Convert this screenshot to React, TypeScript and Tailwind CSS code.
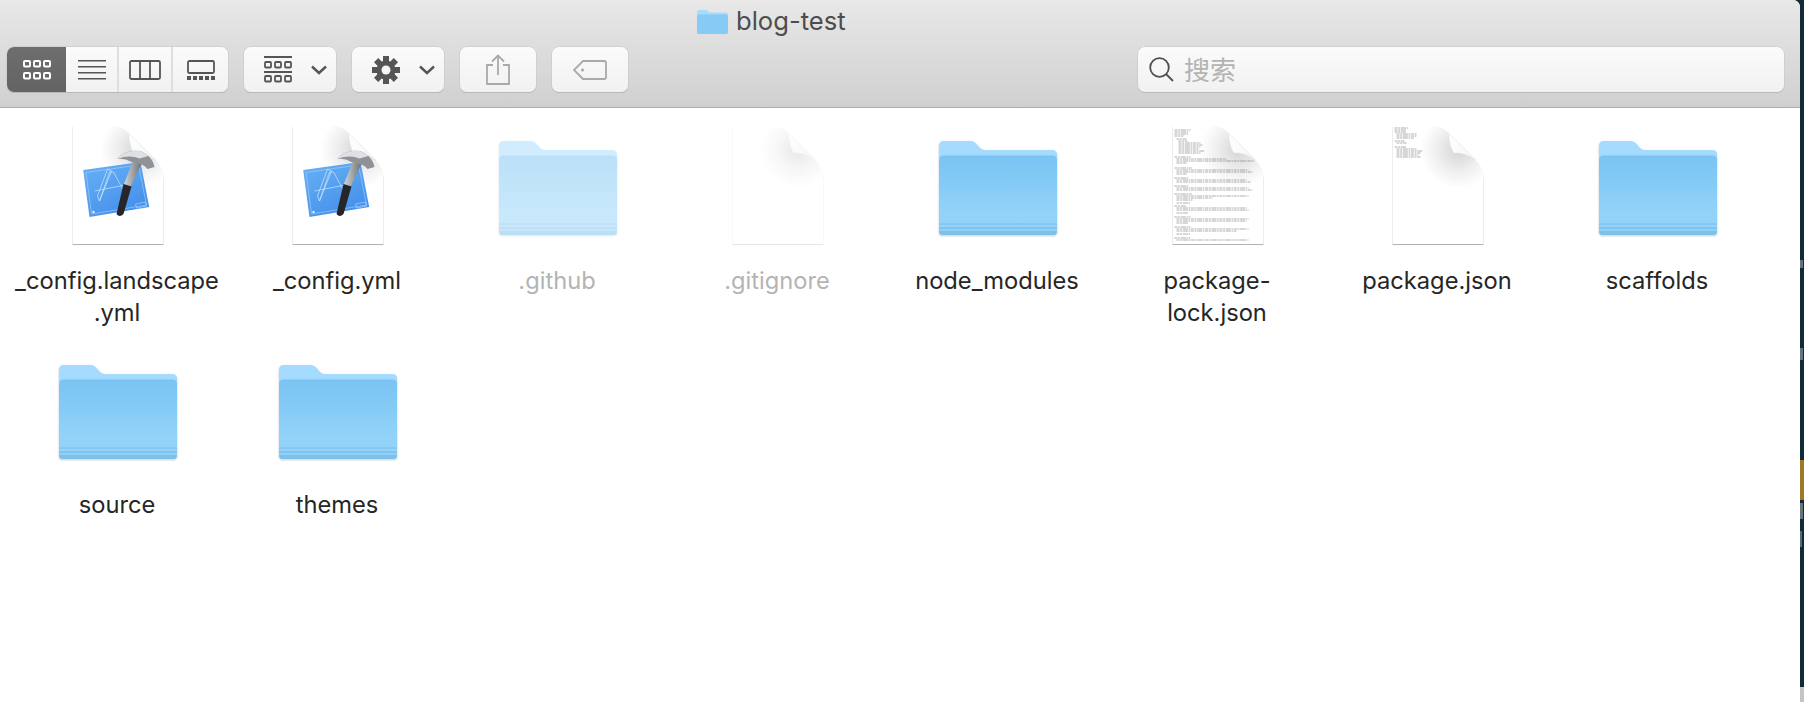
import React from "react";

const font = { fontFamily: "Inter, 'Noto Sans CJK SC', sans-serif" };

function FolderGlyph({ faded = false }: { faded?: boolean }) {
  const id = faded ? "f" : "n";
  return (
    <svg width="120" height="96" viewBox="-1 -1 120 96" className={`mt-[4px] drop-shadow-[0_1px_1px_rgba(60,90,110,0.3)] ${faded ? "opacity-50" : ""}`}>
      <defs>
        <linearGradient id={`front-${id}`} x1="0" y1="0" x2="0" y2="1">
          <stop offset="0" stopColor="#79c3f3" />
          <stop offset="0.75" stopColor="#93d3f9" />
          <stop offset="1" stopColor="#8fd0f7" />
        </linearGradient>
        <linearGradient id={`back-${id}`} x1="0" y1="0" x2="0" y2="1">
          <stop offset="0" stopColor="#a5dbfe" />
          <stop offset="1" stopColor="#9ad5fb" />
        </linearGradient>
      </defs>
      <path d="M0 90 V5 Q0 0 5 0 H32 Q35 0 37 2.5 L41 7 Q43 9 46 9 H113 Q118 9 118 14 V90 Q118 94 114 94 H4 Q0 94 0 90 Z" fill={`url(#back-${id})`} />
      <path d="M0 90 V19 Q0 14.5 5 14.5 H113 Q118 14.5 118 19 V90 Q118 94 114 94 H4 Q0 94 0 90 Z" fill={`url(#front-${id})`} />
      <path d="M0 82 H118 V84 H0 Z" fill="#84c8f3" />
      <path d="M0 84 H118 V86 H0 Z" fill="#97d3f8" />
      <path d="M0 86 H118 V88 H0 Z" fill="#7fc3ef" />
      <path d="M0 88 H118 V90 H0 Z" fill="#92d0f6" />
      <path d="M0 90 H118 Q118 94 114 94 H4 Q0 94 0 90 Z" fill="#7dc0ec" />
    </svg>
  );
}

const body = "M0 0 H40 Q50 0 56 7 L83 34 Q91 42 91 52 V118 H0 Z";

function DocBase({ id, children, over, pale = false }: { id: string; children?: React.ReactNode; over?: React.ReactNode; pale?: boolean }) {
  return (
    <svg width="96" height="124" viewBox="-2.5 -2 96 124">
      <defs>
        <radialGradient id={`shade-${id}`} gradientUnits="userSpaceOnUse" cx="66" cy="24" r="38">
          <stop offset="0" stopColor={pale ? "#e8e8e8" : "#d4d4d4"} />
          <stop offset="0.55" stopColor={pale ? "#f7f7f7" : "#eeeeee"} />
          <stop offset="1" stopColor="#ffffff" />
        </radialGradient>
        <linearGradient id={`fold-${id}`} x1="0" y1="0" x2="1" y2="1">
          <stop offset="0" stopColor="#ffffff" />
          <stop offset="1" stopColor="#f6f6f6" />
        </linearGradient>
      </defs>
      <path d={body} fill="#000" opacity={pale ? 0.1 : 0.3} transform="translate(0 1)" />
      <path d={body} fill={`url(#shade-${id})`} />
      {children}
      <path d="M56 7 L83 34 Q72 26 61 27 Q57 20 56 7 Z" fill={`url(#fold-${id})`} stroke={pale ? "#f0f0f0" : "#dedede"} strokeWidth="0.4" />
      {over}
    </svg>
  );
}

function XcodeDoc({ id }: { id: string }) {
  return (
    <DocBase
      id={id}
      over={
        <>
          <defs>
            <linearGradient id={`bp-${id}`} x1="0" y1="0" x2="0.6" y2="1">
              <stop offset="0" stopColor="#68b2f6" />
              <stop offset="1" stopColor="#4590ea" />
            </linearGradient>
            <linearGradient id={`steel-${id}`} x1="0" y1="0" x2="1" y2="0">
              <stop offset="0" stopColor="#d4d6d9" />
              <stop offset="1" stopColor="#6f7276" />
            </linearGradient>
          </defs>
          <path d="M10.7 44 L68 36 L76.7 81 L17 91 Z" fill={`url(#bp-${id})`} />
          <path d="M13.5 46.5 L66 39 L74 79 L19 88 Z" fill="none" stroke="#a8d0fa" strokeWidth="0.6" />
          <path d="M27 75 L37 46 L41 46 L55 72 M22 65 L58 58" fill="none" stroke="#bcdcfc" strokeWidth="0.8" />
          <path d="M27 75 L25 70 L35 43 L39 45 Z" fill="none" stroke="#d4e8fd" strokeWidth="0.7" />
          <path d="M63 78 L73 76 L74 80 L64 82 Z" fill="none" stroke="#bcdcfc" strokeWidth="0.6" />
          <circle cx="21" cy="86" r="1.2" fill="#e4f0fe" />
          <path d="M60 36 L69 38 L58 61 L51 59 Z" fill={`url(#steel-${id})`} />
          <path d="M51 58 L59 60.5 L51 88 Q47 92 44 88 Z" fill="#26262a" />
          <path d="M45 33 Q50 26 60 25 Q70 24 76 30 Q81 35 82 41 L75 43 Q71 38 65 37.5 L59 36 Q52 32 45 33 Z" fill="#8f9296" />
          <path d="M45 33 Q50 26 60 25 Q70 24 76 30 L67 32.5 Q57 28.5 45 33 Z" fill="#dfe0e3" />
        </>
      }
    />
  );
}

const lockLines: [number, number, number][] = [
  [2, 4, 16],[2, 6, 14],[2, 8, 14],[2, 10, 9],[4, 13, 10],[6, 15, 9],[6, 17, 22],[6, 19, 24],[6, 21, 22],[6, 23, 20],[6, 25, 26],[6, 27, 22],
  [2, 31, 16],[4, 33, 50],[4, 35, 78],[4, 37, 10],[2, 42, 18],[4, 44, 72],[4, 46, 76],[4, 48, 10],[2, 52, 14],[4, 54, 70],[4, 56, 74],[2, 60, 14],[4, 62, 72],[4, 64, 76],
  [2, 68, 18],[4, 70, 72],[4, 72, 36],[4, 74, 16],[4, 77, 14],[2, 80, 12],[4, 82, 70],[4, 84, 72],[4, 87, 12],[2, 91, 16],[4, 93, 72],[4, 95, 70],[4, 97, 12],[2, 101, 16],[4, 103, 72],[4, 105, 60],[4, 108, 14],[2, 112, 16],[4, 114, 72],
];
const pkgLines: [number, number, number][] = [
  [2, 2, 14],[2, 4, 12],[2, 6, 12],[4, 8, 20],[4, 10, 20],[4, 12, 18],[2, 15, 10],[4, 17, 10],[2, 21, 12],[4, 23, 20],[4, 25, 26],[4, 27, 24],[4, 29, 22],[4, 31, 24],
];

function TextDoc({ id, lines }: { id: string; lines: [number, number, number][] }) {
  return (
    <DocBase id={id}>
      {lines.map(([x, y, w], i) => (
        <line key={i} x1={x} x2={x + w} y1={y} y2={y} stroke="#666" strokeOpacity="0.75" strokeWidth="0.7" strokeDasharray="3 0.7 2 0.7 5 0.7 1.5 0.7" />
      ))}
    </DocBase>
  );
}

function Cell({ label, icon, muted = false }: { label: React.ReactNode; icon: React.ReactNode; muted?: boolean }) {
  return (
    <div className="flex flex-col items-center pt-[16px]">
      <div className="h-[124px] w-full pl-[2px] flex items-center justify-center">{icon}</div>
      <div className={`mt-[17px] w-[216px] text-center text-[23.7px] leading-[32px] ${muted ? "text-[#b4b4b4]" : "text-[#262626]"}`}>{label}</div>
    </div>
  );
}

function Btn({ className = "", children }: { className?: string; children: React.ReactNode }) {
  return (
    <div className={`h-[45px] flex items-center rounded-[7px] bg-gradient-to-b from-[#fbfbfb] to-[#f1f1f1] shadow-[0_0_0_0.5px_#c4c4c4,0_1px_0_#acacac] ${className}`}>
      {children}
    </div>
  );
}

const Chevron = () => (
  <svg width="16" height="10" viewBox="0 0 16 10" fill="none" stroke="#555" strokeWidth="2.4">
    <path d="M1 1.5 L8 8 L15 1.5" />
  </svg>
);

const SmallGrid = ({ c }: { c: string }) => (
  <svg width="28" height="20" viewBox="0 0 28 20" fill="none" stroke={c} strokeWidth="2">
    {[1, 11, 21].map((x) => [1, 13].map((y) => <rect key={`${x}-${y}`} x={x} y={y} width="6" height="5.5" rx="1" />))}
  </svg>
);

export default function App() {
  return (
    <div style={font} className="flex h-[702px] w-[1804px] overflow-hidden bg-[#0f2b36]">
      <div className="w-[1800px] flex flex-col bg-white rounded-tr-[7px] overflow-hidden">
        <div className="h-[108px] shrink-0 border-b border-[#adadad] bg-gradient-to-b from-[#e8e8e8] to-[#d0d0d0]">
          <div className="h-[47px] flex items-start pl-[697px]">
            <div className="flex items-center gap-[8px] mt-[7px]">
              <svg width="31" height="24" viewBox="0 0 31 24" className="mt-[1px]">
                <path d="M0 22 V2 Q0 0 2 0 H9 Q10.5 0 11 1 L12 2.5 H29 Q31 2.5 31 4.5 V22 Q31 24 29 24 H2 Q0 24 0 22 Z" fill="#a5dbfe" />
                <path d="M0 22 V6 Q0 4.5 2 4.5 H29 Q31 4.5 31 6 V22 Q31 24 29 24 H2 Q0 24 0 22 Z" fill="#86cbf6" />
              </svg>
              <span className="text-[25.6px] leading-[28px] text-[#4d4d4d]">blog-test</span>
            </div>
          </div>
          <div className="flex items-center pl-[7px] pr-[16px]">
            <Btn className="w-[221px] overflow-hidden">
              <div className="w-[59px] h-full flex items-center justify-center bg-gradient-to-b from-[#6e6e6e] to-[#636363]"><SmallGrid c="#ffffff" /></div>
              <div className="w-[53px] h-full flex items-center justify-center border-r-2 border-[#dedede]">
                <svg width="28" height="20" viewBox="0 0 28 20" fill="#555">
                  <rect y="0" width="28" height="1.5" /><rect y="6" width="28" height="1.5" /><rect y="12" width="28" height="1.5" /><rect y="18" width="28" height="1.5" />
                </svg>
              </div>
              <div className="w-[54px] h-full flex items-center justify-center border-r-2 border-[#dedede]">
                <svg width="32" height="20" viewBox="0 0 32 20" fill="none" stroke="#555" strokeWidth="1.8">
                  <rect x="1" y="1" width="30" height="18" rx="1.5" /><path d="M11 1 V19 M21 1 V19" />
                </svg>
              </div>
              <div className="flex-1 h-full flex items-center justify-center">
                <svg width="28" height="20" viewBox="0 0 28 20" fill="#555">
                  <rect x="1" y="1" width="26" height="12" rx="1.5" fill="none" stroke="#555" strokeWidth="1.8" />
                  {[0, 6, 12, 18, 24].map((x) => <rect key={x} x={x} y="16" width="4" height="4" />)}
                </svg>
              </div>
            </Btn>
            <Btn className="w-[92px] ml-[16px] pl-[20px] gap-[19px]">
              <svg width="28" height="27" viewBox="0 0 28 27" fill="none" stroke="#555" strokeWidth="1.8">
                <path d="M0 1 H28 M0 16 H28" />
                <rect x="1" y="6" width="6" height="5.5" rx="1" /><rect x="11" y="6" width="6" height="5.5" rx="1" /><rect x="21" y="6" width="6" height="5.5" rx="1" />
                <rect x="1" y="20" width="6" height="5.5" rx="1" /><rect x="11" y="20" width="6" height="5.5" rx="1" /><rect x="21" y="20" width="6" height="5.5" rx="1" />
              </svg>
              <Chevron />
            </Btn>
            <Btn className="w-[92px] ml-[16px] pl-[20px] gap-[19px]">
              <svg width="28" height="28" viewBox="0 0 28 28">
                <g fill="#555">
                  {[0, 45, 90, 135, 180, 225, 270, 315].map((a) => (
                    <rect key={a} x="11" y="0" width="6" height="8" transform={`rotate(${a} 14 14)`} />
                  ))}
                  <circle cx="14" cy="14" r="9.5" />
                </g>
                <circle cx="14" cy="14" r="4.5" fill="#f6f6f6" />
              </svg>
              <Chevron />
            </Btn>
            <Btn className="w-[76px] ml-[16px] justify-center">
              <svg width="24" height="31" viewBox="0 0 24 31" fill="none" stroke="#a9a9a9" strokeWidth="1.8">
                <path d="M7 11 H1 V30 H23 V11 H17 M12 21 V2 M6 7.5 L12 1.5 L18 7.5" />
              </svg>
            </Btn>
            <Btn className="w-[76px] ml-[16px] justify-center">
              <svg width="34" height="20" viewBox="0 0 34 20" fill="none" stroke="#a9a9a9" strokeWidth="1.8">
                <path d="M10 1 H31 Q33 1 33 3 V17 Q33 19 31 19 H10 L1 10 Z" />
                <circle cx="9.5" cy="10" r="1.6" fill="#a9a9a9" stroke="none" />
              </svg>
            </Btn>
            <Btn className="w-[646px] ml-auto pl-[11px] gap-[10px]">
              <svg width="25" height="25" viewBox="0 0 25 25" fill="none" stroke="#4f4f4f" strokeWidth="1.8">
                <circle cx="10.5" cy="10.5" r="9.3" /><path d="M17 17 L24 24" />
              </svg>
              <span className="text-[26px] leading-[30px] mt-[2px] text-[#b3b3b3]">搜索</span>
            </Btn>
          </div>
        </div>
        <div className="grid grid-cols-[repeat(8,220px)] auto-rows-[224px] pl-[7px]">
          <Cell label={<>_config.landscape<br />.yml</>} icon={<XcodeDoc id="a" />} />
          <Cell label="_config.yml" icon={<XcodeDoc id="b" />} />
          <Cell label=".github" muted icon={<FolderGlyph faded />} />
          <Cell label=".gitignore" muted icon={<DocBase id="c" pale />} />
          <Cell label="node_modules" icon={<FolderGlyph />} />
          <Cell label={<>package-<br />lock.json</>} icon={<TextDoc id="d" lines={lockLines} />} />
          <Cell label="package.json" icon={<TextDoc id="e" lines={pkgLines} />} />
          <Cell label="scaffolds" icon={<FolderGlyph />} />
          <Cell label="source" icon={<FolderGlyph />} />
          <Cell label="themes" icon={<FolderGlyph />} />
        </div>
      </div>
      <div className="w-[4px] flex flex-col text-[0px]">
        <div className="h-[260px] shrink-0" />
        <div className="h-[8px] w-[3px] bg-[#66757c] shrink-0" />
        <div className="h-[80px] shrink-0" />
        <div className="h-[12px] w-[3px] bg-[#66757c] shrink-0" />
        <div className="h-[100px] shrink-0" />
        <div className="h-[40px] w-[4px] bg-[#9c7a2a] shrink-0" />
        <div className="h-[16px] w-[3px] bg-[#66757c] mt-[3px] shrink-0" />
        <div className="h-[12px] shrink-0" />
        <div className="h-[16px] w-[2px] bg-[#5a6a72] shrink-0" />
        <div className="h-[140px] shrink-0" />
        <div className="flex-1 bg-[#c4c4c4]" />
      </div>
    </div>
  );
}
